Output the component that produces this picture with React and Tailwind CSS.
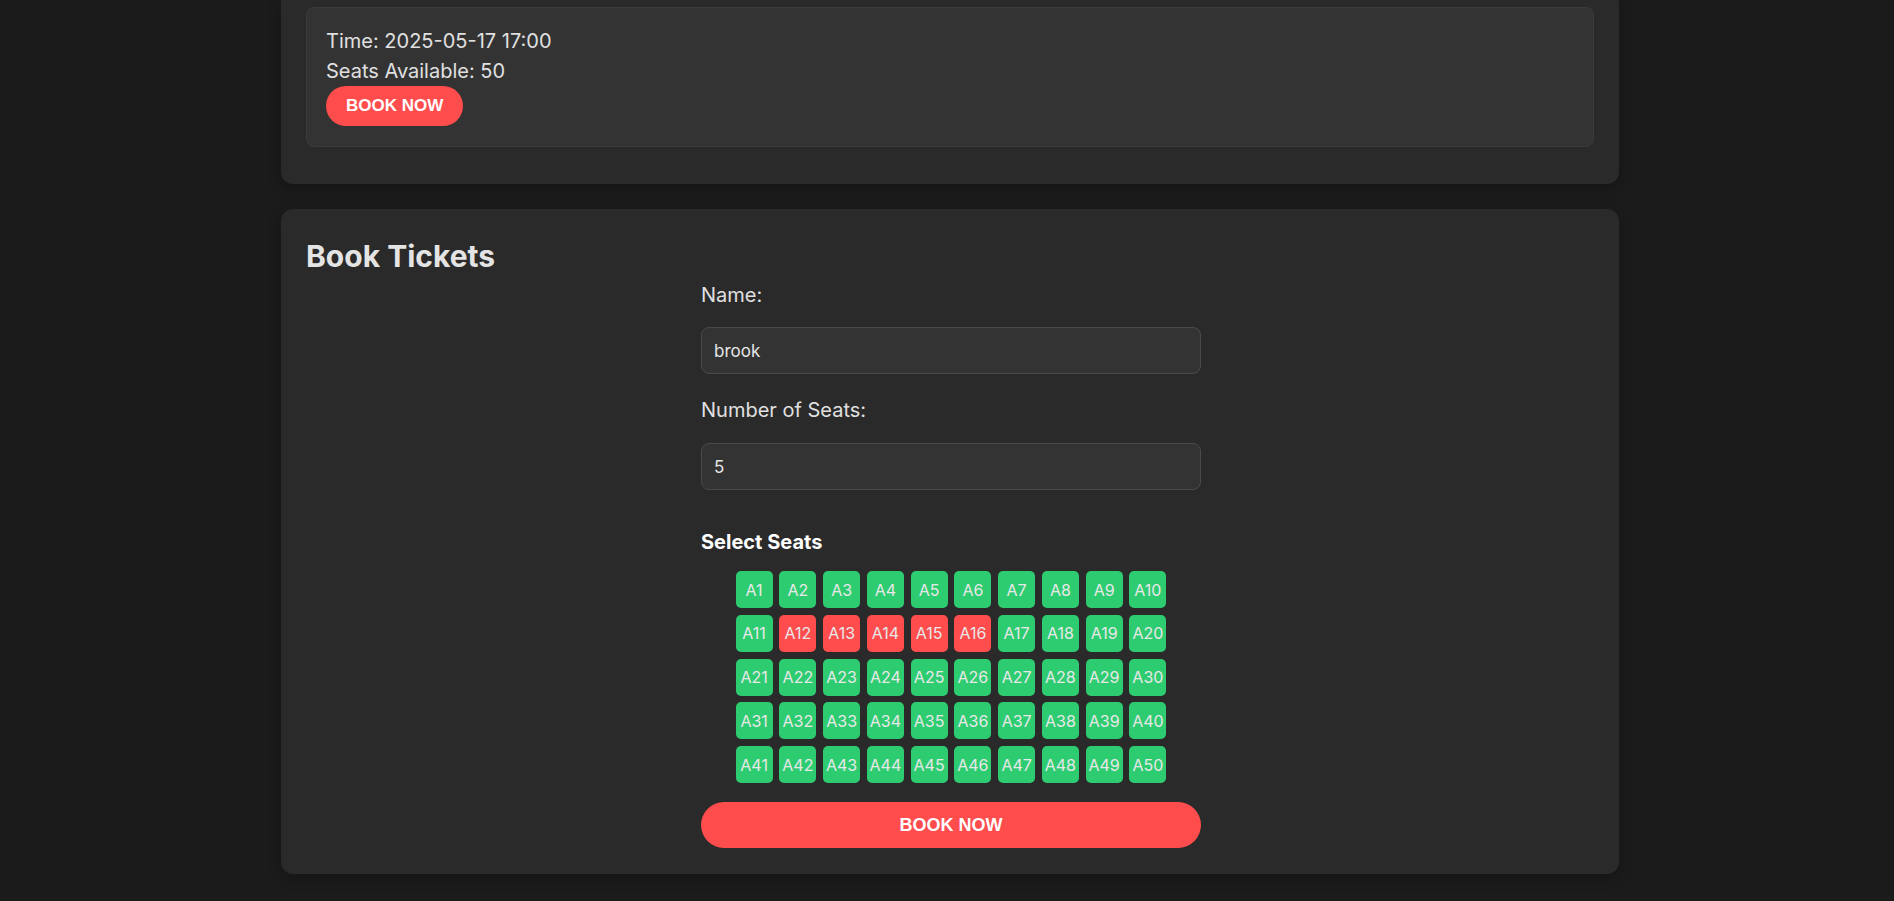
import React, { useState } from "react";

const TAKEN = ["A12", "A13", "A14", "A15", "A16"];

const seats = Array.from({ length: 50 }, (_, i) => `A${i + 1}`);

const App = () => {
    const [name, setName] = useState("brook");
    const [count, setCount] = useState("5");
    const [picked, setPicked] = useState(TAKEN);

    const toggleSeat = (seat) => {
        setPicked((prev) =>
            prev.includes(seat) ? prev.filter((s) => s !== seat) : [...prev, seat]
        );
    };

    return (
        <div className="min-h-screen bg-[#1b1b1b] font-['Inter',sans-serif] text-[#e0e0e0] pb-[28px]">
            {/* showtime card (scrolled, top cut off) */}
            <div className="ml-[281px] w-[1338px] bg-[#2a2a2a] rounded-b-[12px] px-[25px] pt-[7px] pb-[37px] shadow-[0_4px_14px_rgba(0,0,0,0.25)]">
                <div className="bg-[#333333] border border-[#3b3b3b] rounded-[8px] px-[19px] pt-[18px] pb-[20px]">
                    <p className="text-[20px] leading-[30px]">Time: 2025-05-17 17:00</p>
                    <p className="text-[20px] leading-[30px]">Seats Available: 50</p>
                    <button className="px-[20px] h-[40px] rounded-full bg-[#ff4d4d] text-white font-bold text-[17px] font-['Liberation_Sans',Arial,sans-serif]">
                        BOOK NOW
                    </button>
                </div>
            </div>

            {/* booking card */}
            <div className="ml-[281px] mt-[25px] w-[1338px] bg-[#2a2a2a] rounded-[12px] px-[25px] pt-[30px] pb-[26px] shadow-[0_4px_14px_rgba(0,0,0,0.25)]">
                <h2 className="text-[30px] leading-[35px] font-bold text-[#e4e4e4]">Book Tickets</h2>

                <div className="w-[500px] mx-auto mt-[7px] flex flex-col translate-x-[1px]">
                    <label className="text-[20px] leading-[28px]">Name:</label>
                    <input
                        value={name}
                        onChange={(e) => setName(e.target.value)}
                        className="mt-[18px] h-[47px] px-[12px] bg-[#333333] border border-[#4a4a4a] rounded-[8px] text-[17px] text-[#e6e6e6] outline-none"
                    />

                    <label className="mt-[22px] text-[20px] leading-[28px]">Number of Seats:</label>
                    <input
                        value={count}
                        onChange={(e) => setCount(e.target.value)}
                        className="mt-[19px] h-[47px] px-[12px] bg-[#333333] border border-[#4a4a4a] rounded-[8px] text-[17px] text-[#e6e6e6] outline-none"
                    />

                    <h3 className="mt-[38px] text-[20px] leading-[28px] font-bold text-white">Select Seats</h3>

                    <div className="mt-[15px] mx-auto grid grid-cols-[repeat(10,37px)] gap-[6.75px]">
                        {seats.map((seat) => {
                            const taken = picked.includes(seat);
                            return (
                                <div
                                    key={seat}
                                    onClick={() => toggleSeat(seat)}
                                    className={`h-[37px] rounded-[5px] flex items-center justify-center text-[16px] text-[#e8e8e8] cursor-pointer ${
                                        taken ? "bg-[#ff4d4d]" : "bg-[#2ecc71]"
                                    }`}
                                >
                                    {seat}
                                </div>
                            );
                        })}
                    </div>

                    <button className="mt-[19px] h-[46px] rounded-full bg-[#ff4d4d] text-white font-bold text-[18px] font-['Liberation_Sans',Arial,sans-serif]">
                        BOOK NOW
                    </button>
                </div>
            </div>
        </div>
    );
};

export default App;
